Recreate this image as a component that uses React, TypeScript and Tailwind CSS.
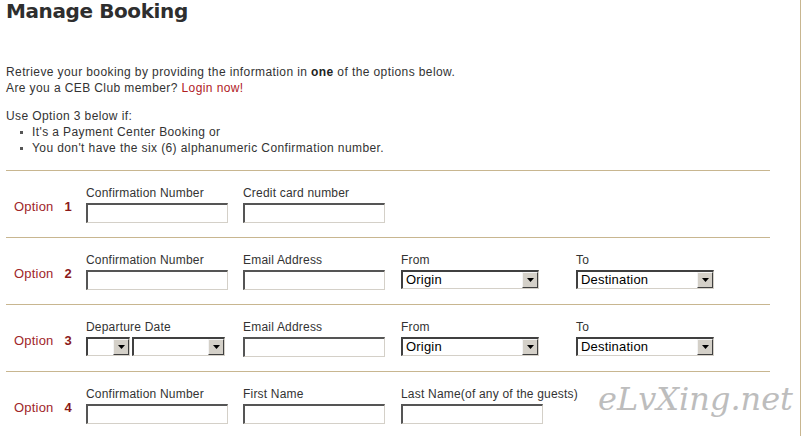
import React from "react";

const font = { fontFamily: '"Liberation Sans", Arial, sans-serif' };

function TextBox({ w = 142 }: { w?: number }) {
  return (
    <div
      className="h-[20px] bg-white border-t-2 border-l-2 border-b border-r border-t-[#555555] border-l-[#555555] border-b-[#d4d0c8] border-r-[#d4d0c8]"
      style={{ width: w }}
    />
  );
}

function Select({ w, text }: { w: number; text?: string }) {
  return (
    <div
      className="h-[19px] bg-white flex border-t-2 border-l-2 border-b border-r border-t-[#404040] border-l-[#404040] border-b-[#d4d0c8] border-r-[#d4d0c8]"
      style={{ width: w }}
    >
      <div className="flex-1 text-[13px] leading-[16px] pl-[3px] text-black overflow-hidden whitespace-nowrap tracking-[0.2px]">
        {text}
      </div>
      <div className="w-[16px] h-[16px] bg-[#d4d0c8] border-t border-l border-b border-r border-t-[#f4f4f4] border-l-[#f4f4f4] border-b-[#404040] border-r-[#404040] flex items-center justify-center">
        <svg width="7" height="4" viewBox="0 0 7 4">
          <path d="M0 0h7L3.5 4z" fill="#000" />
        </svg>
      </div>
    </div>
  );
}

function Field({
  label,
  width,
  children,
}: {
  label: string;
  width: number;
  children: React.ReactNode;
}) {
  return (
    <div className="flex flex-col shrink-0" style={{ width }}>
      <div className="text-[12px] leading-[14px] text-[#333333] whitespace-nowrap tracking-[0.2px]">{label}</div>
      <div className="mt-[3px]">{children}</div>
    </div>
  );
}

function Row({ n, children }: { n: number; children: React.ReactNode }) {
  return (
    <div className="flex border-t border-[#c8b690] pt-[15px] pb-[14px]">
      <div className="w-[80px] shrink-0 pl-[8px] mt-[13px] text-[13px] leading-[15px] whitespace-nowrap tracking-[0.2px]">
        <span className="text-[#a0262a]">Option</span>
        <span className="ml-[11px] font-bold text-[#8b1a1a]">{n}</span>
      </div>
      {children}
    </div>
  );
}

export default function App() {
  return (
    <div
      className="relative w-[802px] h-[436px] overflow-hidden bg-white"
      style={font}
    >
      <div className="absolute top-0 bottom-0 left-[800px] w-px bg-[#c8b690]" />
      <div className="pl-[6px] w-[770px]">
        <h1
          className="text-[20px] leading-[22px] font-bold text-[#2e2e2e] tracking-[-0.4px]"
          style={{ fontFamily: '"DejaVu Sans", Verdana, sans-serif' }}
        >
          Manage Booking
        </h1>
        <div className="mt-[42px] text-[12px] leading-[16px] text-[#333333] tracking-[0.4px]">
          <p>
            Retrieve your booking by providing the information in <b className="text-[#222]">one</b> of the
            options below.
          </p>
          <p>
            Are you a CEB Club member? <span className="text-[#b0201f]">Login now!</span>
          </p>
          <p className="mt-[12px]">Use Option 3 below if:</p>
          <ul className="pl-[14px]">
            <li className="flex items-center">
              <span className="w-[3px] h-[3px] bg-[#555] mr-[9px]" />
              It's a Payment Center Booking or
            </li>
            <li className="flex items-center">
              <span className="w-[3px] h-[3px] bg-[#555] mr-[9px]" />
              You don't have the six (6) alphanumeric Confirmation number.
            </li>
          </ul>
        </div>
        <div className="mt-[14px]">
          <Row n={1}>
            <Field label="Confirmation Number" width={157}>
              <TextBox />
            </Field>
            <Field label="Credit card number" width={158}>
              <TextBox />
            </Field>
          </Row>
          <Row n={2}>
            <Field label="Confirmation Number" width={157}>
              <TextBox />
            </Field>
            <Field label="Email Address" width={158}>
              <TextBox />
            </Field>
            <Field label="From" width={175}>
              <Select w={138} text="Origin" />
            </Field>
            <Field label="To" width={150}>
              <Select w={138} text="Destination" />
            </Field>
          </Row>
          <Row n={3}>
            <Field label="Departure Date" width={157}>
              <div className="flex gap-[2px]">
                <Select w={44} />
                <Select w={93} />
              </div>
            </Field>
            <Field label="Email Address" width={158}>
              <TextBox />
            </Field>
            <Field label="From" width={175}>
              <Select w={138} text="Origin" />
            </Field>
            <Field label="To" width={150}>
              <Select w={138} text="Destination" />
            </Field>
          </Row>
          <Row n={4}>
            <Field label="Confirmation Number" width={157}>
              <TextBox />
            </Field>
            <Field label="First Name" width={158}>
              <TextBox />
            </Field>
            <Field label="Last Name(of any of the guests)" width={175}>
              <TextBox />
            </Field>
          </Row>
        </div>
      </div>
      <div
        className="absolute left-[598px] top-[380px] text-[32px] leading-[38px] italic text-[#bdbdbd] whitespace-nowrap"
        style={{ fontFamily: '"DejaVu Serif", "Liberation Serif", serif' }}
      >
        eLvXing.net
      </div>
    </div>
  );
}
